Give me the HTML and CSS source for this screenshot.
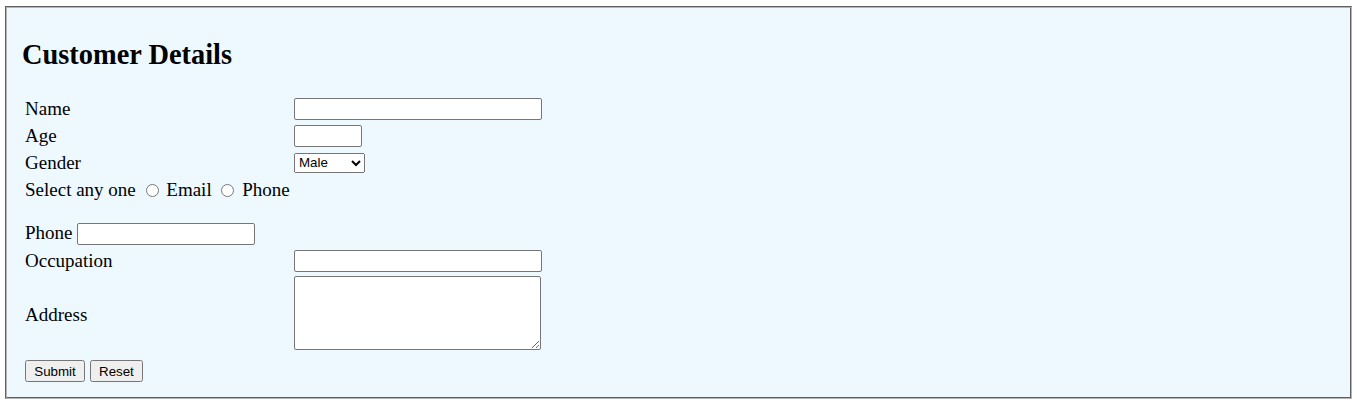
FILE: index.html
```
<!DOCTYPE html>
<html>
<head>
<meta charset="utf-8">
<title>Customer Details</title>
<link rel="stylesheet" href="styles.css">
</head>
<body>
<form class="card">
  <h2 class="title">Customer Details</h2>
  <div class="form">
    <div class="row">
      <label class="label" for="name">Name</label>
      <input class="field field-wide" type="text" id="name">
    </div>
    <div class="row">
      <label class="label" for="age">Age</label>
      <input class="field field-age" type="text" id="age">
    </div>
    <div class="row">
      <label class="label" for="gender">Gender</label>
      <select class="select" id="gender">
        <option>Male</option>
        <option>Female</option>
      </select>
    </div>
    <div class="row row-inline">
      <span>Select any one <input class="radio" type="radio" name="contact"> Email <input class="radio" type="radio" name="contact"> Phone</span>
    </div>
    <div class="spacer"></div>
    <div class="row row-inline">
      <span>Phone <input class="field field-phone" type="text"></span>
    </div>
    <div class="row">
      <label class="label" for="occ">Occupation</label>
      <input class="field field-wide" type="text" id="occ">
    </div>
    <div class="row row-address">
      <label class="label label-address" for="addr">Address</label>
      <textarea class="area" id="addr"></textarea>
    </div>
    <div class="actions">
      <button class="btn btn-submit" type="submit">Submit</button>
      <button class="btn" type="reset">Reset</button>
    </div>
  </div>
</form>
</body>
</html>
```
FILE: styles.css
```
html, body {
  margin: 0;
  padding: 0;
  background: #ffffff;
}

body {
  font-family: "Liberation Serif", "Times New Roman", serif;
  font-size: 19px;
  color: #000;
}

.card {
  margin: 6px 5px;
  border: 2px groove #b4b4b4;
  background: #eef8ff;
  padding: 0 15px 15px;
}

.title {
  margin: 30px 0 0;
  font-family: "Liberation Serif", "Times New Roman", serif;
  font-size: 28.4px;
  font-weight: bold;
  line-height: 33px;
}

.form {
  margin-top: 24px;
  padding-left: 3px;
  display: flex;
  flex-direction: column;
}

.row {
  display: grid;
  grid-template-columns: 269px auto;
  align-items: center;
  justify-items: start;
  height: 27px;
}

.row-inline {
  display: flex;
  align-items: center;
}

.row-address {
  height: 77px;
}

.spacer {
  height: 17px;
}

.label {
  line-height: normal;
}

.label-address {
  padding-top: 4px;
}

.field {
  box-sizing: border-box;
  height: 22px;
  margin: 0;
  font-family: "Liberation Sans", Arial, sans-serif;
  font-size: 13.33px;
  background: #fff;
  border: 1px solid #767676;
  border-radius: 2px;
  padding: 1px 2px;
}

.field-wide {
  width: 248px;
}

.field-age {
  width: 68px;
}

.field-phone {
  width: 178px;
  vertical-align: middle;
}

.select {
  box-sizing: border-box;
  width: 71px;
  height: 20px;
  margin: 0;
  font-family: "Liberation Sans", Arial, sans-serif;
  font-size: 13.33px;
}

.radio {
  margin: 3px 3px 0 5px;
  vertical-align: -1px;
}

.area {
  box-sizing: border-box;
  width: 247px;
  height: 74px;
  margin: 0;
  border: 1px solid #767676;
  border-radius: 2px;
  background: #fff;
}

.actions {
  display: flex;
  gap: 5px;
  margin-top: 9px;
}

.btn {
  box-sizing: border-box;
  height: 22px;
  margin: 0;
  font-family: "Liberation Sans", Arial, sans-serif;
  font-size: 13.33px;
  padding: 1px 7px;
}

.btn-submit {
  min-width: 60px;
}
```
